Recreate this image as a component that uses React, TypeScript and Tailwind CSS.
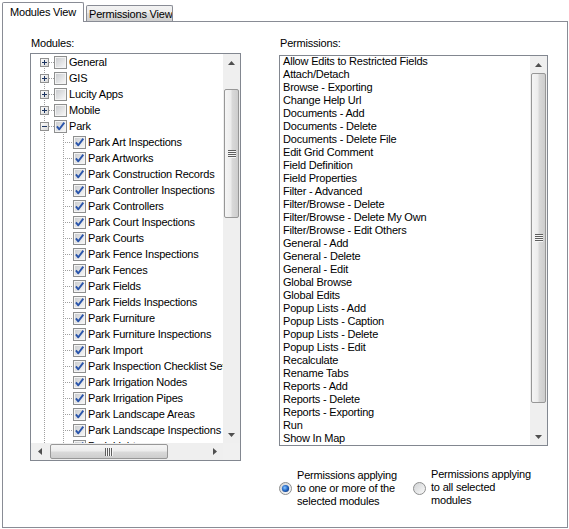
import React from "react";

const roots = ["General", "GIS", "Lucity Apps", "Mobile"];
const children = [
  "Park Art Inspections",
  "Park Artworks",
  "Park Construction Records",
  "Park Controller Inspections",
  "Park Controllers",
  "Park Court Inspections",
  "Park Courts",
  "Park Fence Inspections",
  "Park Fences",
  "Park Fields",
  "Park Fields Inspections",
  "Park Furniture",
  "Park Furniture Inspections",
  "Park Import",
  "Park Inspection Checklist Setup",
  "Park Irrigation Nodes",
  "Park Irrigation Pipes",
  "Park Landscape Areas",
  "Park Landscape Inspections",
  "Park Lights",
];
const permissions = [
  "Allow Edits to Restricted Fields",
  "Attach/Detach",
  "Browse - Exporting",
  "Change Help Url",
  "Documents - Add",
  "Documents - Delete",
  "Documents - Delete File",
  "Edit Grid Comment",
  "Field Definition",
  "Field Properties",
  "Filter - Advanced",
  "Filter/Browse - Delete",
  "Filter/Browse - Delete My Own",
  "Filter/Browse - Edit Others",
  "General - Add",
  "General - Delete",
  "General - Edit",
  "Global Browse",
  "Global Edits",
  "Popup Lists - Add",
  "Popup Lists - Caption",
  "Popup Lists - Delete",
  "Popup Lists - Edit",
  "Recalculate",
  "Rename Tabs",
  "Reports - Add",
  "Reports - Delete",
  "Reports - Exporting",
  "Run",
  "Show In Map",
];

function Checkbox({ checked }: { checked: boolean }) {
  return (
    <svg width="13" height="13" viewBox="0 0 13 13" className="shrink-0">
      <defs>
        <linearGradient id="cbg" x1="0" y1="0" x2="1" y2="1">
          <stop offset="0" stopColor="#cbcdd0" />
          <stop offset="1" stopColor="#f6f6f6" />
        </linearGradient>
      </defs>
      <rect x="0.5" y="0.5" width="12" height="12" fill="#f4f4f4" stroke="#8e8f8f" />
      <rect x="2" y="2" width="9" height="9" fill="url(#cbg)" />
      {checked && (
        <path
          d="M2.9 6.3 L5.3 9.3 L10.3 2.6"
          fill="none"
          stroke="#2a55ab"
          strokeWidth="1.9"
          strokeLinejoin="round"
        />
      )}
    </svg>
  );
}

function Radio({ checked }: { checked: boolean }) {
  return (
    <svg width="13" height="13" viewBox="0 0 13 13" className="shrink-0">
      <defs>
        <linearGradient id="rbg" x1="0" y1="0" x2="1" y2="1">
          <stop offset="0" stopColor="#cfd1d3" />
          <stop offset="1" stopColor="#fbfbfb" />
        </linearGradient>
        <radialGradient id="rdot" cx="0.4" cy="0.4" r="0.65">
          <stop offset="0" stopColor="#8cc8ff" />
          <stop offset="0.55" stopColor="#2a6fcc" />
          <stop offset="1" stopColor="#0f3b85" />
        </radialGradient>
      </defs>
      <circle cx="6.5" cy="6.5" r="6" fill="url(#rbg)" stroke="#8e8f8f" />
      {checked && <circle cx="6.5" cy="6.5" r="3.6" fill="url(#rdot)" />}
    </svg>
  );
}

function RootLines({ first, expanded }: { first: boolean; expanded: boolean }) {
  return (
    <svg width="23" height="16" viewBox="0 0 23 16" className="shrink-0" shapeRendering="crispEdges">
      <line x1="13.5" y1={first ? 8 : 0} x2="13.5" y2="16" stroke="#a0a0a0" strokeDasharray="1 1" />
      <line x1="14" y1="8.5" x2="23" y2="8.5" stroke="#a0a0a0" strokeDasharray="1 1" />
      <defs>
        <linearGradient id="exg" x1="0" y1="0" x2="1" y2="1">
          <stop offset="0" stopColor="#ffffff" />
          <stop offset="1" stopColor="#d6d6d6" />
        </linearGradient>
      </defs>
      <rect x="9.5" y="4.5" width="8" height="8" fill="url(#exg)" stroke="#919191" />
      <line x1="11" y1="8.5" x2="16" y2="8.5" stroke="#1d3561" />
      {!expanded && <line x1="13.5" y1="6" x2="13.5" y2="11" stroke="#1d3561" />}
    </svg>
  );
}

function ChildLines() {
  return (
    <svg width="42" height="16" viewBox="0 0 42 16" className="shrink-0" shapeRendering="crispEdges">
      <line x1="13.5" y1="0" x2="13.5" y2="16" stroke="#a0a0a0" strokeDasharray="1 1" />
      <line x1="32.5" y1="0" x2="32.5" y2="16" stroke="#a0a0a0" strokeDasharray="1 1" />
      <line x1="34" y1="8.5" x2="42" y2="8.5" stroke="#a0a0a0" strokeDasharray="1 1" />
    </svg>
  );
}

function Arrow({ dir }: { dir: "up" | "down" | "left" | "right" }) {
  const pts =
    dir === "up"
      ? "3.5,0 7,4 0,4"
      : dir === "down"
      ? "0,0 7,0 3.5,4"
      : dir === "left"
      ? "4,0 4,7 0,3.5"
      : "0,0 4,3.5 0,7";
  const vertical = dir === "up" || dir === "down";
  return (
    <div className="w-[17px] h-[17px] shrink-0 flex items-center justify-center">
      <svg width={vertical ? 7 : 4} height={vertical ? 4 : 7}>
        <polygon points={pts} fill="#4f4f4f" />
      </svg>
    </div>
  );
}

function VGrip() {
  return (
    <svg width="8" height="8" shapeRendering="crispEdges">
      {[0, 2, 4, 6].map((y) => (
        <g key={y}>
          <rect x="0" y={y} width="8" height="1" fill="#5e5e5e" />
          <rect x="0" y={y + 1} width="8" height="1" fill="#f6f6f6" />
        </g>
      ))}
    </svg>
  );
}

function HGrip() {
  return (
    <svg width="8" height="8" shapeRendering="crispEdges">
      {[0, 2, 4, 6].map((x) => (
        <g key={x}>
          <rect x={x} y="0" width="1" height="8" fill="#5e5e5e" />
          <rect x={x + 1} y="0" width="1" height="8" fill="#f6f6f6" />
        </g>
      ))}
    </svg>
  );
}

function VScroll({ thumb }: { thumb: string }) {
  return (
    <div className="w-[17px] h-full flex flex-col bg-[#efefef]">
      <Arrow dir="up" />
      <div className="flex-1 flex flex-col">
        <div
          className={
            "mx-px rounded-[2px] border border-[#979797] bg-[linear-gradient(to_right,#f5f5f5,#ececec_48%,#dadada_52%,#cdcdcd)] flex items-center justify-center " +
            thumb
          }
        >
          <VGrip />
        </div>
      </div>
      <Arrow dir="down" />
    </div>
  );
}

function HScroll() {
  return (
    <div className="h-[17px] flex bg-[#efefef]">
      <Arrow dir="left" />
      <div className="flex-1 flex items-center">
        <div className="ml-[2px] w-[118px] h-[15px] rounded-[2px] border border-[#979797] bg-[linear-gradient(to_bottom,#f5f5f5,#ececec_48%,#dadada_52%,#cdcdcd)] flex items-center justify-center">
          <HGrip />
        </div>
      </div>
      <Arrow dir="right" />
    </div>
  );
}

export default function App() {
  return (
    <div className="w-[569px] h-[529px] bg-white text-black text-[11px] leading-[13px] tracking-[-0.2px] font-['Liberation_Sans',Arial,sans-serif] overflow-hidden">
      {/* tabs */}
      <div className="flex items-end h-[21px] pl-[2px]">
        <div className="relative z-10 -mb-px w-[82px] h-[20px] bg-white border border-b-0 border-[#898c95] rounded-t-[2px] pl-[7px] pt-[3px] whitespace-nowrap">
          Modules View
        </div>
        <div className="ml-[2px] w-[87px] h-[16px] border border-b-0 border-[#898c95] rounded-t-[2px] bg-[linear-gradient(#f3f3f3,#ebebeb_50%,#dddddd_50%,#cfcfcf)] pl-[2px] pt-[2px] whitespace-nowrap overflow-hidden">
          Permissions View
        </div>
      </div>
      {/* panel */}
      <div className="ml-[2px] w-[566px] h-[507px] border border-[#898c95] bg-white">
        <div className="flex items-start pl-[27px] pt-[15px]">
          {/* Modules */}
          <div className="w-[211px] flex flex-col">
            <div className="pl-px h-[13px]">Modules:</div>
            <div className="mt-[3px] h-[408px] border border-[#828790] grid grid-cols-[1fr_17px] grid-rows-[1fr_17px]">
              <div className="overflow-hidden">
                {roots.map((r, i) => (
                  <div key={r} className="h-[16px] flex items-center whitespace-nowrap">
                    <RootLines first={i === 0} expanded={false} />
                    <Checkbox checked={false} />
                    <span className="ml-[2px]">{r}</span>
                  </div>
                ))}
                <div className="h-[16px] flex items-center whitespace-nowrap">
                  <RootLines first={false} expanded={true} />
                  <Checkbox checked={true} />
                  <span className="ml-[2px]">Park</span>
                </div>
                {children.map((c) => (
                  <div key={c} className="h-[16px] flex items-center whitespace-nowrap">
                    <ChildLines />
                    <Checkbox checked={true} />
                    <span className="ml-[2px]">{c}</span>
                  </div>
                ))}
              </div>
              <VScroll thumb="mt-[18px] h-[129px]" />
              <HScroll />
              <div className="bg-[#f0f0f0]" />
            </div>
          </div>
          {/* Permissions */}
          <div className="ml-[38px] w-[269px] flex flex-col">
            <div className="pl-px h-[13px]">Permissions:</div>
            <div className="mt-[5px] h-[391px] border border-[#828790] flex">
              <div className="flex-1 overflow-hidden">
                <div className="-mt-px">
                  {permissions.map((p) => (
                    <div key={p} className="h-[13px] pl-[3px] whitespace-nowrap">
                      {p}
                    </div>
                  ))}
                </div>
              </div>
              <VScroll thumb="mt-0 h-[330px]" />
            </div>
            <div className="mt-[23px] flex">
              <div className="w-[134px] flex items-center">
                <Radio checked={true} />
                <div className="ml-[5px] whitespace-nowrap">
                  Permissions applying
                  <br />
                  to one or more of the
                  <br />
                  selected modules
                </div>
              </div>
              <div className="flex items-center">
                <Radio checked={false} />
                <div className="ml-[5px] whitespace-nowrap -mt-[2px]">
                  Permissions applying
                  <br />
                  to all selected
                  <br />
                  modules
                </div>
              </div>
            </div>
          </div>
        </div>
      </div>
    </div>
  );
}
